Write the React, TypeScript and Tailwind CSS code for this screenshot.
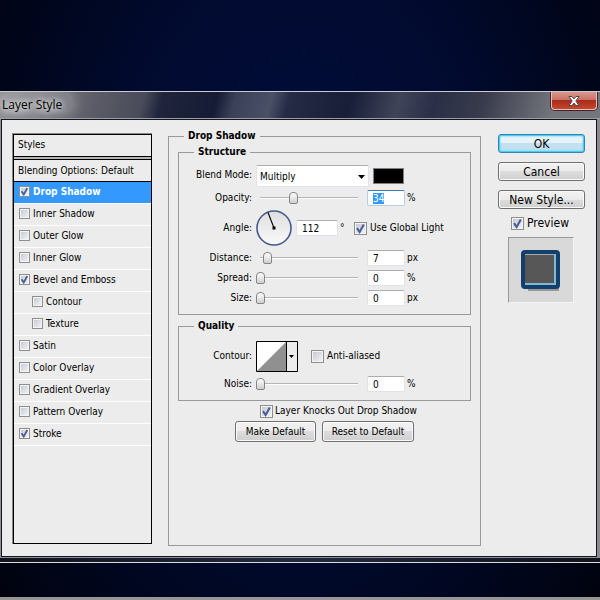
import { useEffect, useRef, type ReactNode } from 'react';
import clsx from 'clsx';

const effects = [
  { name: 'Drop Shadow', checked: true, active: true },
  { name: 'Inner Shadow' },
  { name: 'Outer Glow' },
  { name: 'Inner Glow' },
  { name: 'Bevel and Emboss', checked: true },
  { name: 'Contour', nested: true },
  { name: 'Texture', nested: true },
  { name: 'Satin' },
  { name: 'Color Overlay' },
  { name: 'Gradient Overlay' },
  { name: 'Pattern Overlay' },
  { name: 'Stroke', checked: true },
];

function Checkbox({ label, checked, large, className }: { label: string; checked?: boolean; large?: boolean; className?: string }) {
  return (
    <label className={clsx('flex items-center whitespace-nowrap', className)}>
      <span className={clsx('relative shrink-0', large ? 'size-[13px]' : 'size-[11px]')}>
        <input
          type="checkbox"
          defaultChecked={checked}
          className="peer block size-full appearance-none border border-[#8e8f8f] bg-linear-to-br from-[#c2c6cf] to-[#f6f6f6] shadow-[inset_0_0_0_1px_#f4f4f4]"
        />
        <svg viewBox="0 0 13 13" className="pointer-events-none absolute inset-0 hidden size-full peer-checked:block">
          <path d="M3 6.2 L5.6 10 L9.8 2.4" fill="none" stroke="#4a5f97" strokeWidth="2.1" />
        </svg>
      </span>
      {label}
    </label>
  );
}

function Group({ title, className, children }: { title: string; className?: string; children: ReactNode }) {
  return (
    <fieldset className={clsx('min-w-0 border border-[#999]', className)}>
      <legend className="ml-[15px] h-[14px] px-1 font-bold leading-[14px]">{title}</legend>
      {children}
    </fieldset>
  );
}

function NumberField({ id, value, selected, className }: { id: string; value: number; selected?: boolean; className?: string }) {
  const ref = useRef<HTMLInputElement>(null);

  useEffect(() => {
    if (selected) ref.current?.select();
  }, [selected]);

  return (
    <input
      ref={ref}
      id={id}
      type="text"
      defaultValue={value}
      className={clsx(
        'h-4 shrink-0 rounded-[2px] border border-[#e2e3ea] border-t-[#abadb3] bg-white pt-px pl-[5px] outline-none selection:bg-[#3399ff] selection:text-white focus:border-[#b5cfe7] focus:border-t-[#3d7bad]',
        className,
      )}
    />
  );
}

function SliderRow({ label, value, unit, selected }: { label: string; value: number; unit: string; selected?: boolean }) {
  const id = label.toLowerCase();
  return (
    <div className="flex h-5 items-center">
      <label htmlFor={id} className="w-[73px] shrink-0 pb-px text-right">{label}:</label>
      <input
        type="range"
        aria-label={label}
        defaultValue={value}
        className="ml-1 h-4 min-w-0 flex-1 appearance-none bg-[linear-gradient(#b3b3b8_50%,#fff_50%)] bg-[length:calc(100%-8px)_2px] bg-center bg-no-repeat [&::-webkit-slider-thumb]:h-3 [&::-webkit-slider-thumb]:w-[9px] [&::-webkit-slider-thumb]:appearance-none [&::-webkit-slider-thumb]:rounded-t-[4px] [&::-webkit-slider-thumb]:rounded-b-[2px] [&::-webkit-slider-thumb]:border [&::-webkit-slider-thumb]:border-[#858585] [&::-webkit-slider-thumb]:bg-linear-to-b [&::-webkit-slider-thumb]:from-white [&::-webkit-slider-thumb]:to-[#cfcfcf]"
      />
      <NumberField id={id} value={value} selected={selected} className="ml-[5px] w-[38px]" />
      <span className="ml-[2px] w-[63px] shrink-0 pb-px">{unit}</span>
    </div>
  );
}

function DialogButton({ children, primary, className }: { children: ReactNode; primary?: boolean; className?: string }) {
  return (
    <button
      type="button"
      className={clsx(
        'rounded-[3px] border whitespace-nowrap',
        primary
          ? 'border-[#3c7fb1] bg-[linear-gradient(#e6f3fa_50%,#c2e0f0_50%)] shadow-[inset_0_0_0_1px_#42d0f8,inset_0_0_2px_1px_#42d0f8]'
          : 'border-[#707070] bg-[linear-gradient(#f2f2f2,#ebebeb_50%,#dddddd_50%,#cfcfcf)] shadow-[inset_0_0_0_1px_#fafafa]',
        className,
      )}
    >
      {children}
    </button>
  );
}

function TitleBar() {
  return (
    <header className="flex h-[27px] items-start justify-between overflow-hidden border-b border-[#9a9da6] bg-[linear-gradient(105deg,#8d8d92_0%,#77777e_8%,#5b5c67_16%,#484b59_24%,#20253d_27%,#161b35_36%,#394058_39%,#4a5066_45%,#252b45_48%,#181d38_58%,#3f4459_66%,#2a2f48_72%,#383b4b_80%,#74767d_92%,#74767d_100%)]">
      <h1 className="rounded-full bg-white/15 pt-[3px] pr-3 pl-[2px] font-['Open_Sans','Noto_Sans',sans-serif] text-[12px] leading-[19px] text-black shadow-[0_0_8px_4px_rgb(255_255_255/0.15)] [text-shadow:0_0_6px_#fff,0_0_8px_#fff]">
        Layer Style
      </h1>
      <button
        type="button"
        aria-label="Close"
        className="mr-[3px] flex h-[18px] w-[46px] items-center justify-center rounded-b-[4px] border border-t-0 border-[#e0c4c0] bg-[linear-gradient(#d9988c,#c87064_48%,#a92b19_50%,#c5482f)] shadow-[0_0_0_1px_#4a2024]"
      >
        <svg viewBox="0 0 12 10" className="h-[10px] w-3">
          <path d="M1 .5h3l2 2.4L8 .5h3L7.8 5 11 9.5H8L6 7.1 4 9.5H1L4.2 5z" fill="#fff" stroke="#50474b" strokeWidth="1" />
        </svg>
      </button>
    </header>
  );
}

function EffectList() {
  return (
    <nav className="w-[140px] shrink-0 border-t border-l border-[#8a8a8a]">
      <div className="flex h-full flex-col border border-black">
        <h2 className="h-[21px] pl-1 leading-[20px]">Styles</h2>
        <div className="h-1 shrink-0 border-y border-black bg-[#b5b5b5]" />
        <button type="button" className="h-[22px] shrink-0 border-b border-black pl-1 text-left leading-[20px] whitespace-nowrap">
          Blending Options: Default
        </button>
        <ul>
          {effects.map(effect => (
            <li
              key={effect.name}
              className={clsx(
                'flex h-[22px] items-center border-b border-white pb-[2px]',
                effect.nested ? 'pl-[18px]' : 'pl-[5px]',
                effect.active && 'bg-[#3399ff] font-bold text-white',
              )}
            >
              <Checkbox label={effect.name} checked={effect.checked} className="gap-[3px]" />
            </li>
          ))}
        </ul>
      </div>
    </nav>
  );
}

function DropShadowPanel() {
  return (
    <Group title="Drop Shadow" className="flex-1 pb-[103px]">
      <div className="px-[9px] pt-[2px]">
        <Group title="Structure" className="pb-[6px]">
          <div className="mb-px flex h-7 items-center pt-[5px]">
            <label htmlFor="blend" className="w-[73px] shrink-0 pb-[2px] text-right">Blend Mode:</label>
            <div className="relative ml-1 min-w-0 flex-1">
              <select
                id="blend"
                className="block h-[22px] w-full appearance-none rounded-[2px] border border-[#e2e3ea] border-t-[#abadb3] bg-white pt-[2px] pl-[3px]"
              >
                <option>Multiply</option>
              </select>
              <svg viewBox="0 0 7 4" className="pointer-events-none absolute top-[10px] right-1 h-1 w-[7px]">
                <path d="M0 0h7L3.5 4z" />
              </svg>
            </div>
            <button type="button" aria-label="Shadow color" className="mr-[66px] ml-1 h-4 w-[31px] shrink-0 border border-[#808080] bg-black" />
          </div>
          <SliderRow label="Opacity" value={34} unit="%" selected />
          <div className="flex h-10 items-center">
            <label htmlFor="angle" className="w-[73px] shrink-0 text-right">Angle:</label>
            <svg viewBox="0 0 36 36" className="ml-1 size-9 shrink-0">
              <defs>
                <linearGradient id="dial" x1="0" y1="0" x2="0" y2="1">
                  <stop offset="0" stopColor="#dedede" />
                  <stop offset="1" stopColor="#fafafa" />
                </linearGradient>
              </defs>
              <circle cx="18" cy="18" r="17" fill="url(#dial)" stroke="#465b8c" strokeWidth="1.6" />
              <path d="M18 18 12 2.5" stroke="#000" strokeWidth="1.1" />
              <rect x="16.5" y="16.5" width="3" height="3" />
            </svg>
            <NumberField id="angle" value={112} className="ml-1 w-[42px]" />
            <span className="ml-[2px] w-[14px] shrink-0">°</span>
            <Checkbox label="Use Global Light" checked large className="gap-[3px]" />
          </div>
          <SliderRow label="Distance" value={7} unit="px" />
          <SliderRow label="Spread" value={0} unit="%" />
          <SliderRow label="Size" value={0} unit="px" />
        </Group>
        <Group title="Quality" className="mt-1 pb-[6px]">
          <div className="mb-px flex h-10 items-center pt-[6px]">
            <span className="w-[73px] shrink-0 text-right">Contour:</span>
            <button type="button" aria-label="Contour" className="ml-1 h-[31px] w-[42px] shrink-0">
              <svg viewBox="0 0 42 31" className="size-full">
                <path d="M.5.5h41v30H.5z" fill="#ececec" stroke="#000" />
                <path d="M1 1h29v29H1z" fill="#fff" />
                <path d="M1 30 30 1v29z" fill="#909090" />
                <path d="M30.5 1v29" stroke="#000" />
                <path d="M33 14h5l-2.5 3z" />
              </svg>
            </button>
            <Checkbox label="Anti-aliased" large className="ml-[13px] gap-[3px]" />
          </div>
          <SliderRow label="Noise" value={0} unit="%" />
        </Group>
        <Checkbox label="Layer Knocks Out Drop Shadow" checked large className="mt-[3px] ml-[82px] gap-[2px]" />
        <div className="mt-[3px] ml-[57px] flex gap-[6px]">
          <DialogButton className="h-[21px] w-[81px]">Make Default</DialogButton>
          <DialogButton className="h-[21px] w-[92px]">Reset to Default</DialogButton>
        </div>
      </div>
    </Group>
  );
}

function Actions() {
  return (
    <aside className="ml-[17px] flex w-[87px] shrink-0 flex-col gap-[7px] pt-[5px] text-[12px]">
      <div className="flex flex-col gap-[9px]">
        <DialogButton primary className="h-[19px]">OK</DialogButton>
        <DialogButton className="h-[19px]">Cancel</DialogButton>
        <DialogButton className="h-[19px]">New Style...</DialogButton>
      </div>
      <Checkbox label="Preview" checked large className="ml-[13px] gap-[3px]" />
      <div className="ml-[10px] flex size-[66px] items-center justify-center border border-t-[#999] border-r-[#f4f4f4] border-b-[#f4f4f4] border-l-[#999] bg-[#d9d9d9]">
        <svg viewBox="0 0 42 42" className="size-[42px]">
          <path d="M8 39h31v3H8z" fill="#999" />
          <rect x="3" y="3" width="35" height="35" rx="2" fill="#575757" stroke="#123f6b" strokeWidth="4" />
          <path d="M5 5h30v1H5z" fill="#a9a9a9" />
          <path d="M34 5h2v31H5v-2h29z" fill="#83b8d0" />
        </svg>
      </div>
    </aside>
  );
}

export default function App() {
  return (
    <main className="min-h-screen border-b-[3px] border-[#969696] bg-[radial-gradient(ellipse_65%_100%_at_50%_40%,#020f40,#010a2e_50%,#00020c)] pt-[91px] pb-[34px] font-['DejaVu_Sans_Condensed','DejaVu_Sans',sans-serif] text-[10px] leading-[14px] text-black">
      <div role="dialog" aria-label="Layer Style" className="border-y border-t-[#c9c9ce] border-b-[#dcdcdc] bg-[#151827]">
        <TitleBar />
        <div className="border-r-[3px] border-b border-l border-r-[#8a8a90] border-b-[#8e9096] border-l-[#8e9096]">
          <div className="flex border border-[#12151f] bg-[#ececec] pt-[9px] pr-[11px] pb-[10px] pl-[10px]">
            <div className="mr-4 flex pt-1 pb-[2px]">
              <EffectList />
            </div>
            <DropShadowPanel />
            <Actions />
          </div>
        </div>
        <div className="h-1 bg-linear-to-r from-[#11131c] via-[#232a3f] to-[#11131c]" />
      </div>
    </main>
  );
}
